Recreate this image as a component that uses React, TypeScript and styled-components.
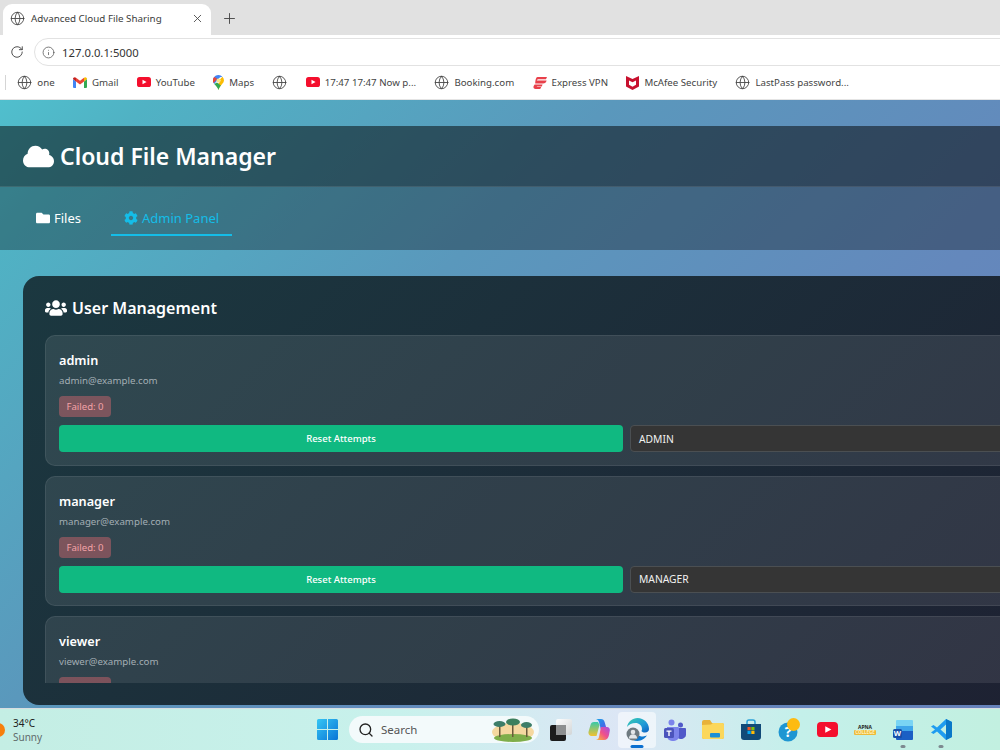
import React from 'react';
import styled, { createGlobalStyle } from 'styled-components';
import { FaCloud, FaCog, FaFolder, FaUsers } from 'react-icons/fa';
import { Globe, Info, Plus, RotateCw, Search, X } from 'lucide-react';

const GlobalStyle = createGlobalStyle`
  html, body {
    margin: 0;
    height: 100%;
    overflow: hidden;
    font-family: "Noto Sans", "Open Sans", "Liberation Sans", sans-serif;
  }
  * { box-sizing: border-box; }
`;

const GmailIcon = () => (
  <svg width="14" height="11" viewBox="0 0 14 11">
    <path d="M0 2v8a1 1 0 0 0 1 1h2V4.500z" fill="#4285f4" />
    <path d="M14 2v8a1 1 0 0 1-1 1h-2V4.500z" fill="#34a853" />
    <path d="M3 4.500 7 7.500l4-3V.8L7 3.800 3 .8z" fill="#ea4335" />
    <path d="M0 2c0-1.600 1.900-2.400 3-1.200v3.700z" fill="#c5221f" />
    <path d="M14 2c0-1.600-1.900-2.400-3-1.200v3.700z" fill="#fbbc04" />
  </svg>
);

const YouTubeIcon = ({ size = 14 }: { size?: number }) => (
  <svg width={size} height={size * 0.72} viewBox="0 0 14 10">
    <rect width="14" height="10" rx="2.600" fill="#f40f2d" />
    <path d="M5.500 2.800 9.600 5 5.500 7.200z" fill="#fff" />
  </svg>
);

const MapsIcon = () => (
  <svg width="11" height="15" viewBox="0 0 11 15">
    <path d="M5.500 0A5.500 5.500 0 0 0 1.200 8.900L7 2.200 9.400 1.700A5.500 5.500 0 0 0 5.500 0z" fill="#4285f4" />
    <path d="M1.200 1.900A5.500 5.500 0 0 0 .6 8l3.600-4.300z" fill="#ea4335" />
    <path d="M11 5.500a5.500 5.500 0 0 0-1.600-3.800L7 4.500a2 2 0 0 1-.2 2.600L4 10l1.500 5c.6-2.500 2-4 3.600-6A5.500 5.500 0 0 0 11 5.500z" fill="#fbbc04" />
    <path d="M1.200 8.900C2.800 10.500 4.700 12.600 5.500 15c.5-2 1.400-3.400 2.400-4.600L4 7.500z" fill="#34a853" />
    <circle cx="5.500" cy="5.500" r="2" fill="#fbe58a" />
  </svg>
);

const ExpressVpnIcon = () => (
  <svg width="14" height="12" viewBox="0 0 14 12">
    <path d="M4.500 0H14l-1 2.300H5.500C4.500 2.300 4 3 3.800 3.600H13.600C13.200 5.500 12 6.600 10 6.600H2.200C2.400 3 3 0 4.500 0z" fill="#e8404a" />
    <path d="M1.600 7.400H9.600L8.800 9.600H4.400C4 9.600 3.700 9.800 3.600 10H8.200L7.200 12H2.500C.6 12-.6 10 1.600 7.400z" fill="#e8404a" />
  </svg>
);

const McAfeeIcon = () => (
  <svg width="13" height="14" viewBox="0 0 13 14">
    <path d="M0 0 6.500 3 13 0v10.500L6.500 14 0 10.500zM3 4.600v4.200l3.500 1.900L10 8.800V4.600L6.500 6.200z" fill="#c8102e" fillRule="evenodd" />
  </svg>
);

const WindowsIcon = () => (
  <svg width="21" height="21" viewBox="0 0 21 21">
    <defs>
      <linearGradient id="win" x1="0" y1="0" x2="1" y2="1">
        <stop offset="0" stopColor="#35c6f4" />
        <stop offset="1" stopColor="#0a74d6" />
      </linearGradient>
    </defs>
    <path d="M0 1.500A1.500 1.500 0 0 1 1.500 0H10v10H0zM11 0h8.500A1.500 1.500 0 0 1 21 1.500V10H11zM0 11h10v10H1.500A1.500 1.500 0 0 1 0 19.500zM11 11h10v8.500a1.500 1.500 0 0 1-1.500 1.500H11z" fill="url(#win)" />
  </svg>
);

const TreesIcon = () => (
  <svg width="44" height="24" viewBox="0 0 44 24">
    <ellipse cx="22" cy="14" rx="21" ry="9" fill="#f5d8a0" />
    <ellipse cx="22" cy="20" rx="19" ry="4" fill="#7fae4a" />
    <path d="M8 8h1.500v11H8zM21 6h1.500v13H21zM35 8h1.500v11H35z" fill="#6b5a3a" />
    <ellipse cx="8.500" cy="6" rx="6" ry="3" fill="#3d7d68" />
    <ellipse cx="22" cy="4" rx="7" ry="3.500" fill="#3c7f5d" />
    <ellipse cx="35.500" cy="7" rx="5.500" ry="3" fill="#3d7d68" />
  </svg>
);

const TaskViewIcon = () => (
  <svg width="22" height="22" viewBox="0 0 22 22">
    <defs>
      <linearGradient id="tvw" x1="0" y1="0" x2="1" y2="1">
        <stop offset="0" stopColor="#ffffff" />
        <stop offset="1" stopColor="#d2d5d6" />
      </linearGradient>
    </defs>
    <rect x="6" y="0" width="16" height="16" rx="2" fill="url(#tvw)" />
    <path d="M2 6h4v10h10v4a2 2 0 0 1-2 2H2a2 2 0 0 1-2-2V8a2 2 0 0 1 2-2z" fill="#1c1c1c" />
    <rect x="6" y="6" width="10" height="10" fill="#8d8f90" />
  </svg>
);

const CopilotIcon = () => (
  <svg width="22" height="21" viewBox="0 0 22 21">
    <defs>
      <linearGradient id="cpa" x1="0" y1="0" x2="1" y2="1">
        <stop offset="0" stopColor="#1aa5e8" />
        <stop offset="0.6" stopColor="#3d6fe8" />
        <stop offset="1" stopColor="#8a4fe0" />
      </linearGradient>
      <linearGradient id="cpb" x1="0" y1="1" x2="1" y2="0">
        <stop offset="0" stopColor="#f9c22e" />
        <stop offset="0.5" stopColor="#f0508a" />
        <stop offset="1" stopColor="#a24fe6" />
      </linearGradient>
      <linearGradient id="cpc" x1="0" y1="0" x2="0" y2="1">
        <stop offset="0" stopColor="#37c9a8" />
        <stop offset="1" stopColor="#f2c230" />
      </linearGradient>
    </defs>
    <path d="M8 0h5c2 0 3 1 3.600 3L19 11h-6L11 3C10.500 1.500 9.500 .3 8 0z" fill="url(#cpa)" />
    <path d="M6 3h4l1.500 3L8.500 17H4C1.500 17 0 15 .6 12.500L2.500 6C3 4 4 3 6 3z" fill="url(#cpc)" />
    <path d="M13 8h6c1.800 0 3 1.500 2.800 3.500l-.8 4.500C20.500 19 18.500 21 16 21H8c1.800-.3 2.600-1.500 3-3z" fill="url(#cpb)" />
  </svg>
);

const EdgeIcon = () => (
  <svg width="23" height="23" viewBox="0 0 23 23">
    <defs>
      <linearGradient id="edg" x1="0" y1="0" x2="1" y2="1">
        <stop offset="0" stopColor="#39cdb0" />
        <stop offset="0.6" stopColor="#1f9ad8" />
        <stop offset="1" stopColor="#0c5fc0" />
      </linearGradient>
    </defs>
    <path d="M1 9C2 3.500 6.500 0 11.500 0 18 0 23 5 23 11c0 2-1.500 3.500-4 3.500-2 0-3.500-.6-3.500-1.500 0-.4.5-.8.5-2 0-3.500-3-6-6.500-6C6 5 3 6.500 1 9z" fill="url(#edg)" />
    <path d="M9 12c0 4 3.500 6.500 8 6.500 1.500 0 3-.5 4-1.200C19 20.500 15.500 23 11.500 23 8 23 5 21 3 18c1-4 3.500-6 6-6z" fill="#0d78cf" />
    <circle cx="7" cy="16" r="6.500" fill="#6f7a80" />
    <circle cx="7" cy="14" r="2.300" fill="#e3e6e8" />
    <path d="M2.800 20.500c.4-3 2-4.300 4.200-4.300s3.800 1.300 4.200 4.300z" fill="#e3e6e8" />
  </svg>
);

const TeamsIcon = () => (
  <svg width="22" height="22" viewBox="0 0 22 22">
    <circle cx="7.500" cy="3.500" r="3" fill="#7b83eb" />
    <circle cx="16.500" cy="6" r="2.500" fill="#5059c9" />
    <path d="M12 9h9a1 1 0 0 1 1 1v6a5 5 0 0 1-8 3z" fill="#5059c9" />
    <path d="M3 8h11a1 1 0 0 1 1 1v8a5 5 0 0 1-5 5H8a5 5 0 0 1-5-5z" fill="#7b83eb" />
    <rect x="0" y="9" width="10" height="10" rx="1.500" fill="#4b53bc" />
    <path d="M2.500 11.500h5v1.200H5.700v4.300H4.300v-4.300H2.500z" fill="#fff" />
  </svg>
);

const FolderIcon = () => (
  <svg width="22" height="19" viewBox="0 0 22 19">
    <path d="M0 2a2 2 0 0 1 2-2h6l2 3h10a2 2 0 0 1 2 2v12a2 2 0 0 1-2 2H2a2 2 0 0 1-2-2z" fill="#e8b23a" />
    <path d="M0 5l9-.5L11 3h9a2 2 0 0 1 2 2v12a2 2 0 0 1-2 2H2a2 2 0 0 1-2-2z" fill="#fbd75b" />
    <rect x="8" y="13" width="10" height="4.500" rx="1" fill="#1a8fd6" />
  </svg>
);

const StoreIcon = () => (
  <svg width="20" height="21" viewBox="0 0 20 21">
    <path d="M6 5V3a2 2 0 0 1 2-2h4a2 2 0 0 1 2 2v2" fill="none" stroke="#2aa1d8" strokeWidth="1.500" />
    <path d="M0 5h20v13a3 3 0 0 1-3 3H3a3 3 0 0 1-3-3z" fill="#114a78" />
    <rect x="6.500" y="8" width="3.200" height="3.200" fill="#f35325" />
    <rect x="10.300" y="8" width="3.200" height="3.200" fill="#81bc06" />
    <rect x="6.500" y="11.800" width="3.200" height="3.200" fill="#05a6f0" />
    <rect x="10.300" y="11.800" width="3.200" height="3.200" fill="#ffba08" />
  </svg>
);

const HelpIcon = () => (
  <svg width="22" height="24" viewBox="0 0 22 24">
    <circle cx="10" cy="14" r="9.500" fill="#1e96d2" />
    <text x="10" y="19" textAnchor="middle" fontSize="14" fontWeight="700" fill="#fff" fontFamily="Noto Sans, sans-serif">?</text>
    <circle cx="15.500" cy="6.500" r="6.500" fill="#fdbb11" />
  </svg>
);

const ApnaIcon = () => (
  <ApnaMark>
    <ApnaTop>APNA</ApnaTop>
    <ApnaBottom>COLLEGE</ApnaBottom>
  </ApnaMark>
);

const WordIcon = () => (
  <svg width="20" height="20" viewBox="0 0 20 20">
    <path d="M3 1a1 1 0 0 1 1-1h15a1 1 0 0 1 1 1v5H3z" fill="#79d4f4" />
    <rect x="3" y="6" width="17" height="5" fill="#3fa6ea" />
    <path d="M3 11h17v8a1 1 0 0 1-1 1H4a1 1 0 0 1-1-1z" fill="#1b5fc4" />
    <rect x="0" y="9" width="9" height="9" rx="1.500" fill="#174fa8" />
    <text x="4.500" y="16" textAnchor="middle" fontSize="7.500" fontWeight="700" fill="#fff" fontFamily="Noto Sans, sans-serif">W</text>
  </svg>
);

const VsCodeIcon = () => (
  <svg width="21" height="21" viewBox="0 0 21 21">
    <path d="M15 0 21 3v15l-6 3-9-8.500L2.500 15 0 13.500 4 10.500 0 7.500 2.500 6l3.500 2.500zM15 5.500 9.500 10.500 15 15.500z" fill="#1f9cf0" fillRule="evenodd" />
    <path d="M15 0 21 3v15l-6 3V15.500L15 5.500z" fill="#0a78c8" />
  </svg>
);

type Mark = { icon: React.ReactNode; label?: string };

const bookmarks: Mark[] = [
  { icon: <Globe size={15} strokeWidth={1.4} />, label: 'one' },
  { icon: <GmailIcon />, label: 'Gmail' },
  { icon: <YouTubeIcon />, label: 'YouTube' },
  { icon: <MapsIcon />, label: 'Maps' },
  { icon: <Globe size={15} strokeWidth={1.4} /> },
  { icon: <YouTubeIcon />, label: '17:47 17:47 Now p...' },
  { icon: <Globe size={15} strokeWidth={1.4} />, label: 'Booking.com' },
  { icon: <ExpressVpnIcon />, label: 'Express VPN' },
  { icon: <McAfeeIcon />, label: 'McAfee Security' },
  { icon: <Globe size={15} strokeWidth={1.4} />, label: 'LastPass password...' },
];

const users = [
  { name: 'admin', email: 'admin@example.com', role: 'ADMIN' },
  { name: 'manager', email: 'manager@example.com', role: 'MANAGER' },
  { name: 'viewer', email: 'viewer@example.com', role: 'VIEWER' },
];

const App = () => {
  return (
    <Shell>
      <GlobalStyle />
      <TabStrip>
        <BrowserTab>
          <Globe size={15} strokeWidth={1.4} color="#444" />
          <TabTitle>Advanced Cloud File Sharing</TabTitle>
          <X size={13} strokeWidth={1.6} color="#444" />
        </BrowserTab>
        <NewTab>
          <Plus size={17} strokeWidth={1.3} color="#444" />
        </NewTab>
      </TabStrip>

      <AddressRow>
        <RotateCw size={14} strokeWidth={1.6} color="#444" />
        <AddressPill>
          <Info size={13} strokeWidth={1.4} color="#555" />
          <AddressText>127.0.0.1:5000</AddressText>
        </AddressPill>
      </AddressRow>

      <BookmarkBar>
        <BookmarkDivider />
        {bookmarks.map((b, i) => (
          <Bookmark key={i}>
            <BookmarkIcon>{b.icon}</BookmarkIcon>
            {b.label && <BookmarkLabel>{b.label}</BookmarkLabel>}
          </Bookmark>
        ))}
      </BookmarkBar>

      <Page>
        <PageHeader>
          <FaCloud size={31} color="#fff" />
          <PageTitle>Cloud File Manager</PageTitle>
        </PageHeader>
        <NavBar>
          <NavTab>
            <FaFolder size={14} />
            Files
          </NavTab>
          <NavTab $active>
            <FaCog size={14} />
            Admin Panel
          </NavTab>
        </NavBar>
        <Panel>
          <PanelTitle>
            <FaUsers size={22} color="#fff" />
            User Management
          </PanelTitle>
          <UserList>
            {users.map(u => (
              <UserCard key={u.name}>
                <UserName>{u.name}</UserName>
                <UserEmail>{u.email}</UserEmail>
                <FailedBadge>Failed: 0</FailedBadge>
                <UserActions>
                  <ResetButton>Reset Attempts</ResetButton>
                  <RoleBox>{u.role}</RoleBox>
                </UserActions>
              </UserCard>
            ))}
          </UserList>
        </Panel>
      </Page>

      <Taskbar>
        <Weather>
          <WeatherSun />
          <WeatherText>
            <WeatherTemp>34°C</WeatherTemp>
            <WeatherSky>Sunny</WeatherSky>
          </WeatherText>
        </Weather>
        <TaskIcons>
          <WindowsIcon />
          <SearchBox>
            <Search size={16} strokeWidth={2} color="#222" />
            <SearchText>Search</SearchText>
            <TreesIcon />
          </SearchBox>
          <TaskSlot><TaskViewIcon /></TaskSlot>
          <TaskSlot><CopilotIcon /></TaskSlot>
          <TaskSlot $active><EdgeIcon /></TaskSlot>
          <TaskSlot><TeamsIcon /></TaskSlot>
          <TaskSlot><FolderIcon /></TaskSlot>
          <TaskSlot><StoreIcon /></TaskSlot>
          <TaskSlot><HelpIcon /></TaskSlot>
          <TaskSlot><YouTubeIcon size={21} /></TaskSlot>
          <TaskSlot><ApnaIcon /></TaskSlot>
          <TaskSlot $running><WordIcon /></TaskSlot>
          <TaskSlot $running><VsCodeIcon /></TaskSlot>
        </TaskIcons>
      </Taskbar>
    </Shell>
  );
};

const Shell = styled.div`
  width: 1000px;
  height: 750px;
  overflow: hidden;
  display: flex;
  flex-direction: column;
  background: #fff;
`;

const TabStrip = styled.div`
  height: 35px;
  flex: none;
  display: flex;
  align-items: flex-end;
  padding-left: 3px;
  background: #e1e1e1;
`;

const BrowserTab = styled.div`
  width: 208px;
  height: 31px;
  display: flex;
  align-items: center;
  padding: 0 7px 2px 7px;
  background: #fff;
  border-radius: 9px 9px 0 0;
`;

const TabTitle = styled.span`
  flex: 1;
  margin-left: 6px;
  font-size: 9.800px;
  color: #3c3c3c;
  white-space: nowrap;
`;

const NewTab = styled.div`
  width: 36px;
  height: 31px;
  display: flex;
  align-items: center;
  justify-content: center;
  padding-bottom: 3px;
`;

const AddressRow = styled.div`
  height: 31px;
  flex: none;
  display: flex;
  align-items: center;
  gap: 10px;
  padding: 3px 0 0 10px;

  svg {
    flex: none;
  }
`;

const AddressPill = styled.div`
  width: 980px;
  height: 28px;
  flex: none;
  display: flex;
  align-items: center;
  gap: 7px;
  padding-left: 7px;
  border: 1px solid #e2e2e2;
  border-radius: 14px;
`;

const AddressText = styled.span`
  font-size: 11.300px;
  color: #333;
`;

const BookmarkBar = styled.div`
  height: 34px;
  flex: none;
  display: flex;
  align-items: center;
  gap: 18.300px;
  padding-left: 5px;
  border-bottom: 1px solid #e4e4e4;
`;

const BookmarkDivider = styled.div`
  width: 1px;
  height: 15px;
  margin-right: -7px;
  background: #d5d5d5;
`;

const Bookmark = styled.div`
  display: flex;
  align-items: center;
  gap: 5px;
`;

const BookmarkIcon = styled.span`
  display: flex;
  color: #444;
`;

const BookmarkLabel = styled.span`
  font-size: 9.700px;
  color: #444;
  white-space: nowrap;
`;

const Page = styled.main`
  flex: 1;
  min-height: 0;
  width: 1253px;
  display: flex;
  flex-direction: column;
  padding-top: 26px;
  background: linear-gradient(135deg, #50bfcd 0%, #50b2c4 8%, #5a98bc 33%, #6488bc 60%, #667eba 100%);
`;

const PageHeader = styled.header`
  height: 61px;
  flex: none;
  display: flex;
  align-items: center;
  gap: 6px;
  padding-left: 23px;
  background: rgba(0, 0, 0, 0.5);
  border-bottom: 1px solid rgba(255, 255, 255, 0.1);
`;

const PageTitle = styled.h1`
  margin: 0;
  font-size: 23px;
  font-weight: 600;
  color: #fff;
`;

const NavBar = styled.nav`
  height: 63px;
  flex: none;
  display: flex;
  align-items: flex-start;
  gap: 17px;
  padding: 13px 0 0 23px;
  background: rgba(0, 0, 0, 0.3);
`;

const NavTab = styled.a<{ $active?: boolean }>`
  height: 36px;
  display: flex;
  align-items: center;
  gap: 4px;
  padding: 2px 13px 0;
  font-size: 13px;
  color: ${props => (props.$active ? '#14bde8' : '#fff')};
  border-bottom: 2px solid ${props => (props.$active ? '#14bde8' : 'transparent')};
`;

const Panel = styled.section`
  flex: 1;
  min-height: 0;
  display: flex;
  flex-direction: column;
  margin: 26px 23px 3px;
  padding: 20px 22px 22px;
  background: linear-gradient(135deg, #1b3840 0%, #1e1e30 100%);
  border-radius: 16px;
`;

const PanelTitle = styled.h2`
  flex: none;
  margin: 0 0 15px;
  display: flex;
  align-items: center;
  gap: 5px;
  height: 24px;
  font-size: 16px;
  font-weight: 600;
  color: #fff;
`;

const UserList = styled.div`
  flex: 1;
  min-height: 0;
  overflow: hidden;
  display: flex;
  flex-direction: column;
  gap: 10px;
`;

const UserCard = styled.article`
  flex: none;
  height: 130.500px;
  padding: 14px 13px;
  background: rgba(255, 255, 255, 0.09);
  border: 1px solid rgba(255, 255, 255, 0.08);
  border-radius: 10px;
`;

const UserName = styled.div`
  height: 20px;
  line-height: 20px;
  font-size: 12.700px;
  font-weight: 600;
  color: #fff;
`;

const UserEmail = styled.div`
  margin-top: 2px;
  height: 18px;
  line-height: 18px;
  font-size: 9.700px;
  color: #a3aeb4;
`;

const FailedBadge = styled.div`
  width: 52px;
  margin-top: 6px;
  height: 21px;
  line-height: 21px;
  text-align: center;
  font-size: 9.600px;
  color: #f2a2a7;
  background: rgba(239, 107, 115, 0.4);
  border-radius: 4px;
`;

const UserActions = styled.div`
  display: grid;
  grid-template-columns: 1fr 1fr;
  gap: 7px;
  margin-top: 8px;
`;

const ResetButton = styled.button`
  height: 27px;
  padding: 0;
  border: none;
  border-radius: 4px;
  font-family: inherit;
  font-size: 9.500px;
  font-weight: 500;
  color: #fff;
  background: #10b981;
`;

const RoleBox = styled.div`
  height: 27px;
  display: flex;
  align-items: center;
  padding: 0 8px;
  font-size: 10.300px;
  color: #f0f0f0;
  background: #353535;
  border: 1px solid #4b4f52;
  border-radius: 4px;
`;

const Taskbar = styled.footer`
  height: 42px;
  flex: none;
  display: flex;
  align-items: center;
  background: linear-gradient(90deg, #c4eee4 0%, #c8f1ec 40%, #dce6f5 62%, #c4f0ea 80%, #c2f0e0 100%);
  border-top: 1px solid #d8dde0;
`;

const Weather = styled.div`
  width: 317px;
  flex: none;
  display: flex;
  align-items: center;
  gap: 4px;
  overflow: hidden;
`;

const WeatherSun = styled.span`
  width: 9px;
  height: 14px;
  flex: none;
  background: #f77f0c;
  border-radius: 0 8px 8px 0;
  transform: translateX(-4px);
`;

const WeatherText = styled.div`
  display: flex;
  flex-direction: column;
  line-height: 14px;
`;

const WeatherTemp = styled.span`
  font-size: 10px;
  color: #222;
`;

const WeatherSky = styled.span`
  font-size: 10px;
  color: #5f6b6b;
`;

const TaskIcons = styled.div`
  display: flex;
  align-items: center;
`;

const SearchBox = styled.div`
  width: 190px;
  height: 27px;
  margin: 0 3px 0 11px;
  display: flex;
  align-items: center;
  gap: 7px;
  padding: 0 4px 0 9px;
  background: #f3fafb;
  border-radius: 14px;
`;

const SearchText = styled.span`
  flex: 1;
  font-size: 11.500px;
  color: #555;
`;

const TaskSlot = styled.div<{ $active?: boolean; $running?: boolean }>`
  position: relative;
  width: 38px;
  height: 36px;
  display: flex;
  align-items: center;
  justify-content: center;
  border-radius: 4px;
  background: ${props => (props.$active ? 'rgba(255,255,255,0.55)' : 'transparent')};

  &::after {
    content: '';
    display: ${props => (props.$active || props.$running ? 'block' : 'none')};
    position: absolute;
    bottom: 0;
    left: 50%;
    transform: translateX(-50%);
    width: ${props => (props.$active ? '13px' : '5px')};
    height: 3px;
    border-radius: 2px;
    background: ${props => (props.$active ? '#0a6fd0' : '#7d8a90')};
  }
`;

const ApnaMark = styled.div`
  display: flex;
  flex-direction: column;
  align-items: center;
`;

const ApnaTop = styled.span`
  font-size: 5px;
  line-height: 5px;
  font-weight: 700;
  color: #222;
`;

const ApnaBottom = styled.span`
  padding: 0 1px;
  font-size: 4.500px;
  line-height: 5px;
  font-weight: 700;
  color: #fff2c0;
  background: #eebb3a;
  border-radius: 1px;
`;

export default App;
